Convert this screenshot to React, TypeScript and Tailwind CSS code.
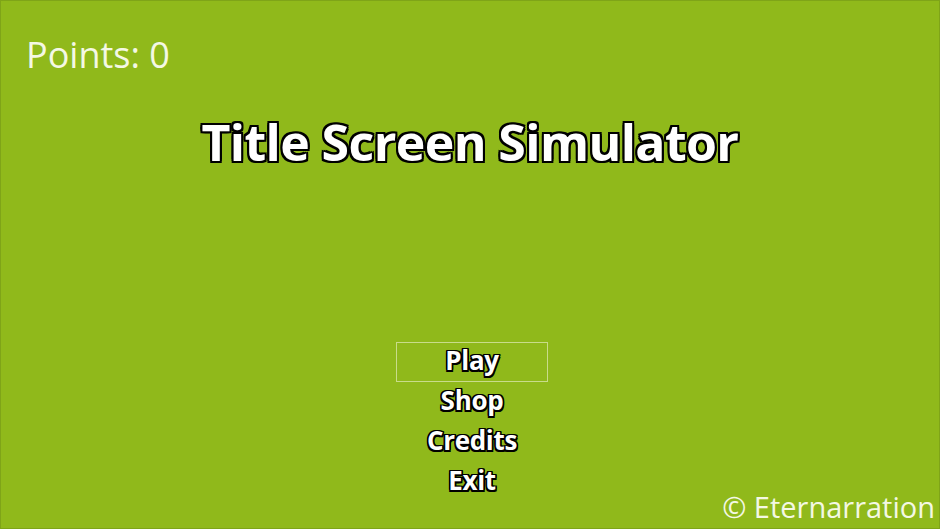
const outline =
  "[text-shadow:-2px_-2px_0_#000,2px_-2px_0_#000,-2px_2px_0_#000,2px_2px_0_#000,0_-2px_0_#000,0_2px_0_#000,-2px_0_0_#000,2px_0_0_#000]";
const outlineSm =
  "[text-shadow:-1.5px_-1.5px_0_#000,1.5px_-1.5px_0_#000,-1.5px_1.5px_0_#000,1.5px_1.5px_0_#000,0_-1.5px_0_#000,0_1.5px_0_#000,-1.5px_0_0_#000,1.5px_0_0_#000]";

const menu = ["Play", "Shop", "Credits", "Exit"];

export default function App() {
  return (
    <div className="relative flex h-[529px] w-[940px] flex-col border border-[#7fa418] bg-[#90b91b] font-['Open_Sans',sans-serif] text-white">
      <div className="pl-[25px] pt-[30px] text-[36px] font-normal leading-[48px] text-[#f4f8e4]">Points: 0</div>

      <h1 className={`mt-[30px] text-center text-[50px] font-bold leading-[66px] tracking-[-0.6px] ${outline}`}>
        Title Screen Simulator
      </h1>

      <div className="ml-[4px] mt-[167px] flex flex-col items-center">
        {menu.map((item, i) => (
          <div
            key={item}
            className={`flex h-[40px] w-[152px] items-center justify-center pb-[3px] text-[26px] font-bold tracking-[-0.3px] ${outlineSm} ${
              i === 0 ? "border border-[#c9dc8a]" : ""
            }`}
          >
            {item}
          </div>
        ))}
      </div>

      {/* copyright sits in the corner, overlapping the menu's last row */}
      <div className="absolute bottom-[3px] right-[4px] text-[29px] font-normal leading-[36px] text-[#f4f8e4]">
        © Eternarration
      </div>
    </div>
  );
}
